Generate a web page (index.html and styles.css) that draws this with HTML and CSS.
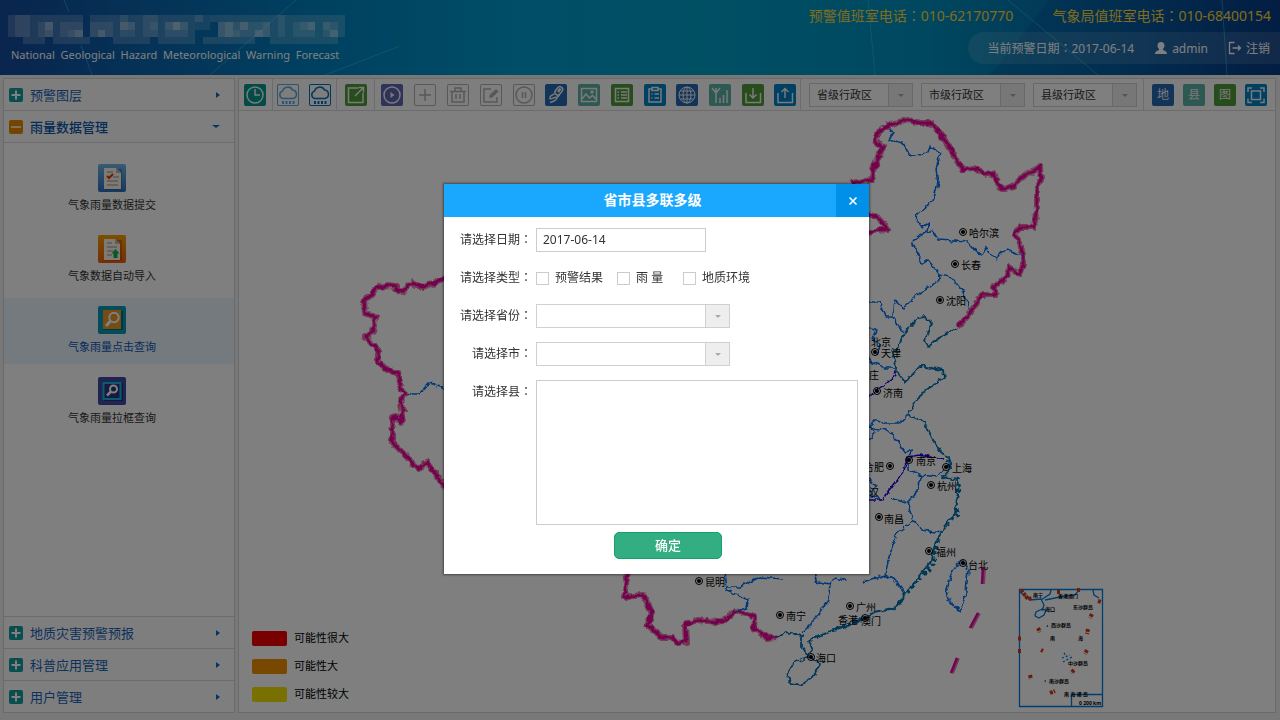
FILE: index.html
```html
<!DOCTYPE html>
<html lang="zh-CN">
<head>
<meta charset="utf-8">
<title>National Geological Hazard Meteorological Warning Forecast</title>
<link rel="stylesheet" href="styles.css">
</head>
<body>
<div class="page">
  <header class="top">
    <svg class="top-lines" viewBox="0 0 1280 75" preserveAspectRatio="none" aria-hidden="true">
      <path d="M990 75L1050 0H1280V75z" fill="#003a8c" opacity=".18"/>
      <path d="M64 0l5 12M81 45l11 30M296 0L210 75M400 46L325 75M868 0l7 75M1008 0l90 75M1222 0l5 75" stroke="#3fd0e8" stroke-width="1" fill="none" opacity=".45"/>
    </svg>
    <div class="brand">
      <svg class="logo" viewBox="0 0 45 4" preserveAspectRatio="none" shape-rendering="crispEdges" aria-hidden="true">
        <path opacity=".2" d="M0 0h10v3H0zM11 0h15v1H11zM27 0h2v1h-2zM29 0h16v3H29zM11 1h14v2H11zM2 3h3v1H2zM6 3h5v1H6zM14 3h5v1h-5zM20 3h5v1h-5zM26 3h7v1h-7zM35 3h9v1h-9z"/>
        <path opacity=".16" d="M1 0h2v3H1zM4 1h2v2H4zM7 1h3v2H7zM11 1h3v2h-3zM15 0h1v3h-1zM18 0h2v3h-2zM21 1h3v2h-3zM28 1h7v2h-7zM25 0h2v2h-2zM36 0h1v3h-1zM38 1h3v2h-3zM42 1h2v2h-2z"/>
        <path opacity=".3" d="M5 1h1v1H5zM9 2h1v1H9zM12 2h1v1h-1zM15 1h2v1h-2zM22 1h1v1h-1zM28 1h2v2h-2zM31 1h1v1h-1zM33 2h1v1h-1zM40 1h1v1h-1zM43 2h1v1h-1z"/>
        <path opacity=".14" d="M5 2h1v1H5zM8 2h1v1H8zM16 2h1v1h-1zM19 1h1v1h-1zM21 1h3v1h-3zM30 2h1v1h-1zM34 1h1v2h-1zM39 1h1v1h-1zM42 1h1v1h-1z"/>
      </svg>
      <p class="subtitle">National &nbsp;Geological &nbsp;Hazard &nbsp;Meteorological &nbsp;Warning &nbsp;Forecast</p>
    </div>
    <div class="top-right">
      <div class="phones"><span>预警值班室电话<span class="colon" lang="zh-TW">：</span>010-62170770</span><span>气象局值班室电话<span class="colon" lang="zh-TW">：</span>010-68400154</span></div>
      <div class="userbar">
        <span>当前预警日期<span class="colon" lang="zh-TW">：</span>2017-06-14</span>
        <a class="user" href="#"><svg width="14" height="14" viewBox="0 0 14 14"><path fill="currentColor" d="M7 1c2.300 0 3.500 1.500 3.500 3.600 0 1.500-.7 2.600-1.500 3.400v1c1.500.7 4 1.400 4 4H1c0-2.600 2.500-3.300 4-4V8C4.200 7.200 3.500 6.100 3.500 4.600 3.500 2.500 4.700 1 7 1z"/></svg>admin</a>
        <a class="logout" href="#"><svg width="14" height="14" viewBox="0 0 14 14" fill="none" stroke="currentColor" stroke-width="1.300"><path d="M6.500 1.500H1.500v11h5M4.500 7h8M10 4.500L12.500 7 10 9.500"/></svg>注销</a>
      </div>
    </div>
  </header>

  <div class="work">
    <aside class="side">
      <button class="fold" type="button"><svg class="sq" viewBox="0 0 14 14"><rect width="14" height="14" rx="2" fill="#159a9c"/><path d="M7 2.500v9M2.500 7h9" stroke="#fff" stroke-width="2"/></svg><span>预警图层</span><i class="arrow"></i></button>
      <button class="fold open" type="button"><svg class="sq" viewBox="0 0 14 14"><rect width="14" height="14" rx="2" fill="#e98a00"/><path d="M2 7h10" stroke="#fff" stroke-width="1.500"/></svg><span>雨量数据管理</span><i class="arrow"></i></button>
      <nav class="menu">
        <a class="item" href="#"><svg viewBox="0 0 28 28"><defs><linearGradient id="b1" x2="0" y2="1"><stop stop-color="#6fb6e4"/><stop offset="1" stop-color="#2f6fbc"/></linearGradient></defs><rect width="28" height="28" rx="2" fill="url(#b1)"/><path d="M7 5h17v21H7z" fill="#124a8a" opacity=".35"/><path d="M6 4h12l5 5v16H6z" fill="#fff4e6"/><path d="M18 4v5h5z" fill="#bbb"/><path d="M9 8h6M15 13h6M9 17h11M9 21h11" stroke="#b9b4ac" stroke-width="1.500"/><path d="M9 12l2 2 4-4" stroke="#e8321c" stroke-width="2" fill="none"/></svg><span>气象雨量数据提交</span></a>
        <a class="item" href="#"><svg viewBox="0 0 28 28"><defs><linearGradient id="b2" x2="0" y2="1"><stop stop-color="#f7a000"/><stop offset="1" stop-color="#ee5c10"/></linearGradient></defs><rect width="28" height="28" rx="2" fill="url(#b2)"/><path d="M7 5h17v21H7z" fill="#a34800" opacity=".5"/><path d="M6 4h11l5 5v16H6z" fill="#fff4e6"/><path d="M17 4v5h5z" fill="#bbb"/><path d="M9 8h5M9 12h10M9 16h6M9 20h5" stroke="#b9b4ac" stroke-width="1.500"/><path d="M17.500 14l4 4.500h-2V23h-4v-4.500h-2z" fill="#16b04a"/></svg><span>气象数据自动导入</span></a>
        <a class="item current" href="#"><svg viewBox="0 0 28 28"><rect width="28" height="28" rx="2" fill="#0798b4"/><path d="M5 5h20v19H5z" fill="#046a80"/><path d="M5 4h18v19H5z" fill="#eb9a26"/><circle cx="16" cy="11.500" r="4.700" fill="none" stroke="#fff" stroke-width="2"/><path d="M12.500 15L8 20" stroke="#fff" stroke-width="3"/></svg><span>气象雨量点击查询</span></a>
        <a class="item" href="#"><svg viewBox="0 0 28 28"><rect width="28" height="28" rx="2" fill="#3c4ba4"/><path d="M6 6h19v18H6z" fill="#252d72"/><rect x="5.500" y="6" width="17" height="16" fill="#2c3580" stroke="#16b6dc" stroke-width="2"/><circle cx="15.500" cy="12" r="3.500" fill="none" stroke="#fff" stroke-width="2"/><path d="M13 14.500L9 18.500" stroke="#fff" stroke-width="2.500"/></svg><span>气象雨量拉框查询</span></a>
      </nav>
      <button class="fold" type="button"><svg class="sq" viewBox="0 0 14 14"><rect width="14" height="14" rx="2" fill="#159a9c"/><path d="M7 2.500v9M2.500 7h9" stroke="#fff" stroke-width="2"/></svg><span>地质灾害预警预报</span><i class="arrow"></i></button>
      <button class="fold" type="button"><svg class="sq" viewBox="0 0 14 14"><rect width="14" height="14" rx="2" fill="#159a9c"/><path d="M7 2.500v9M2.500 7h9" stroke="#fff" stroke-width="2"/></svg><span>科普应用管理</span><i class="arrow"></i></button>
      <button class="fold" type="button"><svg class="sq" viewBox="0 0 14 14"><rect width="14" height="14" rx="2" fill="#159a9c"/><path d="M7 2.500v9M2.500 7h9" stroke="#fff" stroke-width="2"/></svg><span>用户管理</span><i class="arrow"></i></button>
    </aside>

    <main class="main">
      <div class="toolbar">
        <div class="group">
          <button class="tool teal" type="button" aria-label="clock"><svg viewBox="0 0 22 22"><circle cx="11" cy="11" r="8"/><path d="M11 5v6h5"/></svg></button>
        </div>
        <div class="group wide">
          <button class="tool line sky" type="button" aria-label="rain"><svg viewBox="0 0 22 22"><path d="M6 14.500a3.800 3.800 0 0 1-.5-7.400A5.400 5.400 0 0 1 15.500 6a4.300 4.300 0 0 1 .5 8.500z"/><path d="M5 18.500h12.500" stroke-width="3" stroke-dasharray="2 1.500"/></svg></button>
          <button class="tool line blue" type="button" aria-label="rainfall"><svg viewBox="0 0 22 22"><path d="M6 14.500a3.800 3.800 0 0 1-.5-7.400A5.400 5.400 0 0 1 15.500 6a4.300 4.300 0 0 1 .5 8.500z"/><path d="M5 18.500h12.500" stroke-width="3" stroke-dasharray="2 1.500"/></svg></button>
        </div>
        <div class="group roomy">
          <button class="tool green" type="button" aria-label="export"><svg viewBox="0 0 22 22"><path d="M13 4H3.500v14.500H18V9M10 12l8-8M13.500 3.500h5v5"/></svg></button>
        </div>
        <div class="group actions">
          <div class="set">
            <button class="tool violet" type="button" aria-label="play"><svg viewBox="0 0 22 22"><circle cx="11" cy="11" r="8"/><path d="M9.500 8l4 3-4 3z" fill="currentColor" stroke="none"/></svg></button>
            <button class="tool line grey" type="button" aria-label="add"><svg viewBox="0 0 22 22"><path d="M11 5v12M5 11h12"/></svg></button>
            <button class="tool line grey" type="button" aria-label="delete"><svg viewBox="0 0 22 22"><path d="M3 7.500h16M5 7.500V18h12V7.500M8 7V4h6v3M9 10v5M13 10v5"/></svg></button>
            <button class="tool line grey" type="button" aria-label="edit"><svg viewBox="0 0 22 22"><path d="M11 5H4v13h13v-5"/><path d="M9 14l1-3.500L16 5l2.500 2.500-6 6z" fill="currentColor" stroke="none"/></svg></button>
            <button class="tool line grey" type="button" aria-label="pause"><svg viewBox="0 0 22 22"><circle cx="11" cy="11" r="8"/><path d="M9.500 8v6M12.500 8v6"/></svg></button>
          </div>
          <div class="set">
            <button class="tool navy" type="button" aria-label="link"><svg viewBox="0 0 22 22"><rect x="11" y="2.500" width="5.500" height="9" rx="2.700" transform="rotate(38 14 7)"/><path d="M13 8l2.500-3.500" stroke-width="2.500"/><path d="M9.500 10C6.500 11 4 13 5 14.500S10 12 11.500 13.500 8 18 5 18.500M11.500 13.500c1.500-.5 2.500-1.500 3-3"/></svg></button>
            <button class="tool mint" type="button" aria-label="picture"><svg viewBox="0 0 22 22"><rect x="3.500" y="4.500" width="15" height="13"/><path d="M4 15l4-5 3.500 4 3-2.500 4 4"/><circle cx="14" cy="8" r="1"/></svg></button>
            <button class="tool green" type="button" aria-label="list"><svg viewBox="0 0 22 22"><rect x="4.500" y="4.500" width="13" height="13"/><path d="M6.500 8h1.500M10 8h6M6.500 11h1.500M10 11h6M6.500 14h1.500M10 14h6"/></svg></button>
            <button class="tool azure" type="button" aria-label="clipboard"><svg viewBox="0 0 22 22"><path d="M8 5H5v13h12V5h-3M8 3.500h6v3H8zM7.500 10h1M10.500 10H15M7.500 14h1M10.500 14H15"/></svg></button>
          </div>
          <div class="set">
            <button class="tool navy" type="button" aria-label="globe"><svg viewBox="0 0 22 22" class="thin"><circle cx="11" cy="11" r="8"/><ellipse cx="11" cy="11" rx="4" ry="8"/><path d="M3 11h16M11 3v16M4.500 7h13M4.500 15h13"/></svg></button>
            <button class="tool mint" type="button" aria-label="signal"><svg viewBox="0 0 22 22"><path d="M3 4l4 5 4-5M7 4v15M11 14v5M14.500 11v8M18 6v13"/></svg></button>
            <button class="tool green" type="button" aria-label="download"><svg viewBox="0 0 22 22"><path d="M4 9v9.500h14.500V9M11 4v10M7.500 10.500L11 14l3.500-3.500"/></svg></button>
          </div>
          <div class="set">
            <button class="tool azure" type="button" aria-label="upload"><svg viewBox="0 0 22 22"><path d="M4 9v9.500h14.500V9M11 14V5M7.500 8L11 4.500 14.500 8"/></svg></button>
          </div>
        </div>
        <div class="group areas">
          <span class="select"><select aria-label="省级行政区"><option>省级行政区</option></select></span>
          <span class="select"><select aria-label="市级行政区"><option>市级行政区</option></select></span>
          <span class="select"><select aria-label="县级行政区"><option>县级行政区</option></select></span>
        </div>
        <div class="group marks">
          <button class="tool navy" type="button">地</button>
          <button class="tool mint" type="button">县</button>
          <button class="tool green" type="button">图</button>
          <button class="tool azure" type="button" aria-label="full screen"><svg viewBox="0 0 22 22"><rect x="6.500" y="7" width="9" height="8.500"/><path d="M7 4H3v4M15 4h4v4M3 14.500v4h4M19 14.500v4h-4"/></svg></button>
        </div>
      </div>

      <div class="map">
        <svg class="china" viewBox="239 111 1036 601" preserveAspectRatio="xMidYMid meet">
          <defs>
            <filter id="crinkle" x="-5%" y="-5%" width="110%" height="110%" color-interpolation-filters="sRGB"><feTurbulence type="fractalNoise" baseFrequency=".16" numOctaves="2" seed="4" result="n"/><feDisplacementMap in="SourceGraphic" in2="n" scale="6" xChannelSelector="R" yChannelSelector="G"/></filter>
            <path id="frontier" d="M850 183L872 180 873 170 878 158 883 147 875 142 876 137 883 128 895 123 908 120 920 123 930 123 940 133 950 148 958 162 963 170 973 168 987 173 995 175 997 182 1003 190 1013 186 1025 175 1040 167 1041 180 1037 187 1037 207 1034 227 1020 227 1015 235 1020 243 1023 255 1023 265 1020 275 1010 268 1007 277 993 287 997 295 980 295 977 303 967 317 958 327M868 214L878 218 888 229 878 230 868 233M446 278L423 287 412 283 403 292 397 290 397 286 387 285 375 289 372 295 364 300 365 313 375 317 373 333 365 337 378 350 378 362 388 370 400 375 399 387 406 394 400 400 403 413 401 423 397 417 392 418 392 442 403 453 418 469 427 463 435 473 446 489M628 572L624 597 643 595 652 612 647 625 662 637 672 637 677 643 686 642 685 625 697 620 717 622 728 619 735 611 755 617 754 628 767 638 776 637"/>
            <g id="dot"><circle r="3.500" fill="none" stroke="#000"/><circle r="2"/></g>
          </defs>
          <g fill="none" stroke-linejoin="round" filter="url(#crinkle)">
            <use href="#frontier" stroke="#e878a8" stroke-width="6"/>
            <use href="#frontier" stroke="#e800a0" stroke-width="3"/>
            <g stroke="#0070ee" stroke-width="1.600">
              <path d="M408 394H419L429 383 446 389M890 128L893 133 889 140 903 143 910 156 928 152 930 147 940 153 936 170 938 183 933 200 915 217 922 227 929 222 927 230 925 233 933 231 938 240 968 242 973 248 982 255 986 248 996 260 1000 253 1008 250 1023 256M925 233L911 242 918 253 922 264 928 260 940 275 952 278 963 292 970 310M940 275L938 282 920 293 903 307 895 300 893 317 903 333M866 302L880 302 886 317 893 317M868 328L876 330 872 340 880 345 878 355M866 359L885 368 897 368"/>
              <path d="M908 415L900 423 883 423 875 420 868 427 887 430 898 440 905 452 913 450 908 460 908 470 922 475 937 477 943 470M868 440L876 433 868 426M922 475L918 490 907 503 890 498M907 503L913 520 922 530 942 533M913 520L897 533 890 553 885 575 863 582M885 575L898 582 903 593M868 480L877 485 870 495 883 500"/>
              <path d="M725 572L727 590 738 595 748 600 747 608 735 611M727 587L740 587 760 577 783 579M815 572L818 583 830 585 828 600 817 618 803 632M830 585L835 577 846 580M958 563L950 577 947 590 949 600 960 612 966 593 968 570 963 562z"/>
            </g>
            <g stroke="#2300d8" stroke-width="1.600"><path d="M897 368L895 375 880 388 868 399M868 500L883 500 890 490 903 473 908 457 920 455 943 460"/></g>
            <g stroke="#0070b0" stroke-width="1.800">
              <path d="M957 328L943 335 928 347 925 340 932 323 925 317 918 318 903 335 898 347 893 352 897 372 905 382 912 375 920 366 943 370 944 377 920 395 908 415 925 423 937 448 948 457 952 467 943 477 958 480 957 497 955 513 947 523 942 533 935 543 932 560 905 593 897 607 875 612 860 620 847 627 833 630 817 637 809 640 813 650 808 655 802 647 802 636 785 633 776 637M810 657L793 663 787 673 790 683 802 685 813 677 820 663z"/>
              <path stroke-width="4" stroke-dasharray="3 3" d="M947 459L950 469M959 478L956 515 947 524M937 540L934 563 916 583 906 594M837 629L866 617"/>
            </g>
          </g>
          <g stroke="#e878a8" stroke-width="4"><path d="M984 567L983 584M979 613L971 628M958 658L952 673"/><path stroke="#e800b0" stroke-width="2.500" d="M983 567L982 584M978 613L970 628M957 658L951 673"/></g>
          <g>
            <use href="#dot" x="963" y="232"/><use href="#dot" x="955" y="264"/><use href="#dot" x="940" y="300"/><use href="#dot" x="875" y="352"/><use href="#dot" x="877" y="391"/><use href="#dot" x="890" y="466"/><use href="#dot" x="909" y="460"/><use href="#dot" x="946" y="467"/><use href="#dot" x="931" y="485"/><use href="#dot" x="879" y="517"/><use href="#dot" x="929" y="551"/><use href="#dot" x="963" y="563"/><use href="#dot" x="699" y="581"/><use href="#dot" x="780" y="615"/><use href="#dot" x="850" y="606"/><use href="#dot" x="811" y="657"/><use href="#dot" x="865" y="618"/>
          </g>
          <g class="city">
            <text x="969" y="237">哈尔滨</text><text x="961" y="269">长春</text><text x="946" y="305">沈阳</text><text x="871" y="346">北京</text><text x="881" y="357">天津</text><text x="849" y="379">石家庄</text><text x="883" y="397">济南</text><text x="864" y="471">合肥</text><text x="916" y="465">南京</text><text x="952" y="472">上海</text><text x="937" y="490">杭州</text><text x="859" y="496">武汉</text><text x="884" y="523">南昌</text><text x="936" y="556">福州</text><text x="968" y="569">台北</text><text x="705" y="586">昆明</text><text x="786" y="620">南宁</text><text x="856" y="611">广州</text><text x="838" y="624">香港</text><text x="861" y="625">澳门</text><text x="816" y="662">海口</text>
          </g>
          <g fill="none" stroke="#007ce0" stroke-width="1.300">
            <path d="M1019.500 589.500h83v117h-83zM1071.500 706v-11.500h31M1020 592L1030 600 1041 599 1044 605 1042 611M1041 600L1050 594 1051 590M1045 600L1060 597 1075 595 1079 590M1093 590L1094 595 1099 598M1042 609l-6 3-1 4 4 2 5-3 2-5z"/>
            <path stroke-dasharray="2 2" d="M1062 658l8-3M1063 662l9-5M1064 653l3 4M1047 627l1-3M1045 682l1-4"/>
          </g>
          <path fill="none" stroke="#d03c14" stroke-width="4" stroke-dasharray="3 1" d="M1021 590L1028 599 1032 598M1057 592h3M1077 590h3M1098 601l3 1M1092 614l-2 4M1038 628l2 4M1088 629l-1 5M1041 650l2 1M1087 650l-2 4M1074 670l-3 3M1030 675l1 4M1050 693l5-2M1018 638.500h3M1018 651h3"/>
          <g class="tiny">
            <text x="1033" y="597">南宁</text><text x="1058" y="598">香港澳门</text><text x="1045" y="611">海口</text><text x="1073" y="609">东沙群岛</text><text x="1051" y="627">西沙群岛</text><text x="1050" y="640">南</text><text x="1078" y="640">海</text><text x="1068" y="665">中沙群岛</text><text x="1049" y="683">南沙群岛</text><text x="1064" y="696">南 海 诸 岛</text><text x="1079" y="705">0 200 km</text>
          </g>
        </svg>
        <ul class="legend">
          <li><i class="red"></i>可能性很大</li>
          <li><i class="orange"></i>可能性大</li>
          <li><i class="yellow"></i>可能性较大</li>
        </ul>
      </div>
    </main>
  </div>
</div>

<div class="mask">
  <form class="dialog" role="dialog" aria-labelledby="dialog-title">
    <div class="dialog-head">
      <h2 id="dialog-title">省市县多联多级</h2>
      <button class="close" type="button" aria-label="关闭"><svg width="10" height="10" viewBox="0 0 10 10"><path d="M1.500 1.500l7 7M8.500 1.500l-7 7" stroke="#fff" stroke-width="1.600"/></svg></button>
    </div>
    <div class="fields">
      <label for="date">请选择日期<span class="colon" lang="zh-TW">：</span></label>
      <input id="date" class="box date" type="text" value="2017-06-14">
      <span class="label" id="kind">请选择类型<span class="colon" lang="zh-TW">：</span></span>
      <div class="checks" role="group" aria-labelledby="kind">
        <label class="check"><input type="checkbox">预警结果</label>
        <label class="check"><input type="checkbox">雨 量</label>
        <label class="check"><input type="checkbox">地质环境</label>
      </div>
      <label for="province">请选择省份<span class="colon" lang="zh-TW">：</span></label>
      <span class="select"><select id="province"><option></option></select></span>
      <label for="city">请选择市<span class="colon" lang="zh-TW">：</span></label>
      <span class="select"><select id="city"><option></option></select></span>
      <label for="county">请选择县<span class="colon" lang="zh-TW">：</span></label>
      <textarea id="county" class="box"></textarea>
    </div>
    <button class="confirm" type="submit">确定</button>
  </form>
</div>
</body>
</html>
```
FILE: styles.css
```css
* { box-sizing: border-box; }

body {
  margin: 0;
  font-family: "Noto Sans", "Noto Sans CJK SC", sans-serif;
  font-size: 12px;
  color: #333;
  background: #f1f1f1;
}

button, input, select, textarea { font: inherit; color: inherit; margin: 0; }
button { border: 0; padding: 0; background: none; cursor: pointer; }
a { color: inherit; text-decoration: none; }
.colon { font-family: "Noto Sans CJK TC", sans-serif; line-height: 1; }

.page { display: flex; flex-direction: column; height: 100vh; min-height: 600px; overflow: hidden; }

/* header */
.top {
  position: relative;
  display: flex;
  justify-content: space-between;
  height: 75px;
  flex: none;
  background: linear-gradient(90deg, #124a9c 0%, #0a66b0 12%, #0080c0 24%, #009cd0 40%, #00a0c8 55%, #0090c0 72%, #0668a8 86%, #083c84 100%);
  color: #fff;
}
.top-lines { position: absolute; inset: 0; width: 100%; height: 100%; }
.brand, .top-right { position: relative; }
.brand { padding: 15px 0 0 8px; }
.logo { display: block; width: 337px; height: 29px; fill: #fff; }
.subtitle { margin: 3px 0 0 3px; font-size: 11px; line-height: 16px; white-space: pre; }
.top-right { display: flex; flex-direction: column; align-items: flex-end; }
.phones { display: flex; gap: 39px; padding: 6px 9px 6px 0; font-size: 14px; line-height: 20px; color: #ffd83a; }
.userbar {
  display: flex;
  align-items: center;
  gap: 20px;
  height: 32px;
  padding: 0 10px 0 19px;
  border-radius: 16px 0 0 16px;
  background: rgba(255, 255, 255, .12);
}
.user, .logout { display: flex; align-items: center; gap: 4px; }

/* work area */
.work { display: flex; flex: 1; gap: 3px; min-height: 0; padding: 3px 4px 7px 3px; }
.side, .main { display: flex; flex-direction: column; border: 1px solid #d4d4d4; background: #fff; }
.side { width: 232px; flex: none; }
.main { flex: 1; min-width: 0; }

.fold {
  display: flex;
  align-items: center;
  gap: 7px;
  height: 32px;
  flex: none;
  padding: 0 14px 0 5px;
  border-bottom: 1px solid #d8d8d8;
  background: #fdfdfd;
  color: #1a62b4;
  font-size: 13px;
  text-align: left;
}
.fold:last-child { height: 31px; border-bottom: 0; }
.fold span { flex: 1; }
.fold.open { font-weight: 500; color: #0a57ac; }
.sq { width: 14px; height: 14px; }
.arrow { border: 3px solid transparent; border-left: 4px solid #0a6cc4; border-right: 0; }
.open .arrow { border: 4px solid transparent; border-top: 3px solid #0a6cc4; border-bottom: 0; }

.menu {
  display: flex;
  flex-direction: column;
  gap: 5px;
  flex: 1;
  min-height: 0;
  padding-top: 13px;
  border-bottom: 1px solid #d8d8d8;
}
.item {
  display: flex;
  flex-direction: column;
  align-items: center;
  gap: 4px;
  padding: 8px 14px 8px 0;
  font-size: 11px;
  line-height: 18px;
}
.item svg { width: 28px; height: 28px; }
.item.current { background: #e8f4fc; color: #0c56b8; }

/* toolbar */
.toolbar { display: flex; height: 32px; flex: none; border-bottom: 1px solid #d8d8d8; background: #fcfcfc; }
.group { display: flex; align-items: center; padding: 0 6px 0 5px; border-right: 1px solid #d8d8d8; }
.group:last-child { border-right: 0; }
.group.wide { gap: 10px; padding: 0 5px 0 4px; }
.group.roomy { padding: 0 7px 0 8px; }
.group.actions { gap: 10px; padding: 0 4px 0 6px; }
.group.areas { gap: 8px; padding: 0 6px 0 8px; }
.group.marks { gap: 9px; padding: 0 8px; }
.set { display: flex; gap: 11px; }
.tool { width: 22px; height: 22px; border-radius: 2px; color: #f4f4f4; line-height: 22px; }
.tool svg { display: block; width: 22px; height: 22px; fill: none; stroke: currentColor; stroke-width: 1.5px; }
.tool svg.thin { stroke-width: 1px; }
.line { box-shadow: inset 0 0 0 1px currentColor; }
.teal { background: #06968e; }
.green { background: #4f9a38; }
.violet { background: #5f66b0; }
.navy { background: #2368b0; }
.mint { background: #5cb0a4; }
.azure { background: #0080c4; }
.sky { color: #58a8d4; }
.blue { color: #0070bc; }
.grey { color: #b0b0b0; }

.select { position: relative; display: block; width: 194px; height: 24px; }
.select::after {
  content: "";
  position: absolute;
  right: 9px;
  top: 11px;
  border: 3px solid transparent;
  border-top-color: #aaa;
  pointer-events: none;
}
.select select {
  display: block;
  width: 100%;
  height: 100%;
  padding: 0 8px;
  appearance: none;
  border: 1px solid #d0d0d0;
  border-radius: 0;
  background: linear-gradient(90deg, #d0d0d0 1px, #eee 1px) right / 24px 100% no-repeat, #fff;
}
.areas .select { width: 104px; font-size: 11px; }
.areas select { padding: 0 7px; }

/* map */
.map { position: relative; flex: 1; min-height: 0; }
.china { display: block; width: 100%; height: 100%; }
.city { font-size: 10px; font-weight: 400; fill: #000; }
.tiny { font-size: 5px; font-weight: 700; fill: #000; }
.legend {
  position: absolute;
  left: 13px;
  bottom: 9px;
  display: flex;
  flex-direction: column;
  gap: 10px;
  margin: 0;
  padding: 0;
  list-style: none;
  font-size: 11px;
  line-height: 18px;
  color: #000;
}
.legend li { display: flex; align-items: center; gap: 7px; }
.legend i { width: 35px; height: 15px; border-radius: 2px; }
.red { background: #f00000; }
.orange { background: #f09000; }
.yellow { background: #f0e000; }

/* dialog */
.mask {
  position: fixed;
  inset: 0;
  display: flex;
  align-items: center;
  justify-content: center;
  padding: 38px 0 0 33px;
  background: rgba(0, 0, 0, .5);
}
.dialog { width: 425px; padding-bottom: 15px; background: #fff; box-shadow: 0 0 2px 1px rgba(0, 0, 0, .45); }
.dialog-head { display: flex; height: 33px; background: #1aa8ff; color: #fff; }
.dialog-head h2 { flex: 1; margin: 0; padding-left: 25px; font-size: 14px; line-height: 32px; text-align: center; }
.close { display: flex; align-items: center; justify-content: center; width: 33px; background: #0090ea; }
.fields {
  display: grid;
  grid-template-columns: 72px 1fr;
  gap: 14px 4px;
  padding: 11px 11px 7px 16px;
  line-height: 24px;
}
.fields > label, .fields > .label { text-align: right; white-space: nowrap; }
.box { display: block; width: 100%; border: 1px solid #ccc; border-radius: 0; background: #fff; outline: 0; }
.date { width: 170px; height: 24px; padding: 0 6px; }
textarea.box { height: 145px; padding: 4px 6px; resize: none; }
.checks { display: flex; gap: 14px; }
.check { display: flex; align-items: center; gap: 6px; min-width: 52px; }
.check input { appearance: none; width: 13px; height: 13px; border: 1px solid #ccc; background: #fff; }
.check input:checked { background: #1aa8ff; }
.confirm {
  display: block;
  width: 108px;
  height: 27px;
  margin: 0 0 0 170px;
  border: 1px solid #16a06e;
  border-radius: 5px;
  background: #33ad82;
  color: #fff;
  font-size: 13px;
  font-weight: 500;
  line-height: 25px;
}
```
